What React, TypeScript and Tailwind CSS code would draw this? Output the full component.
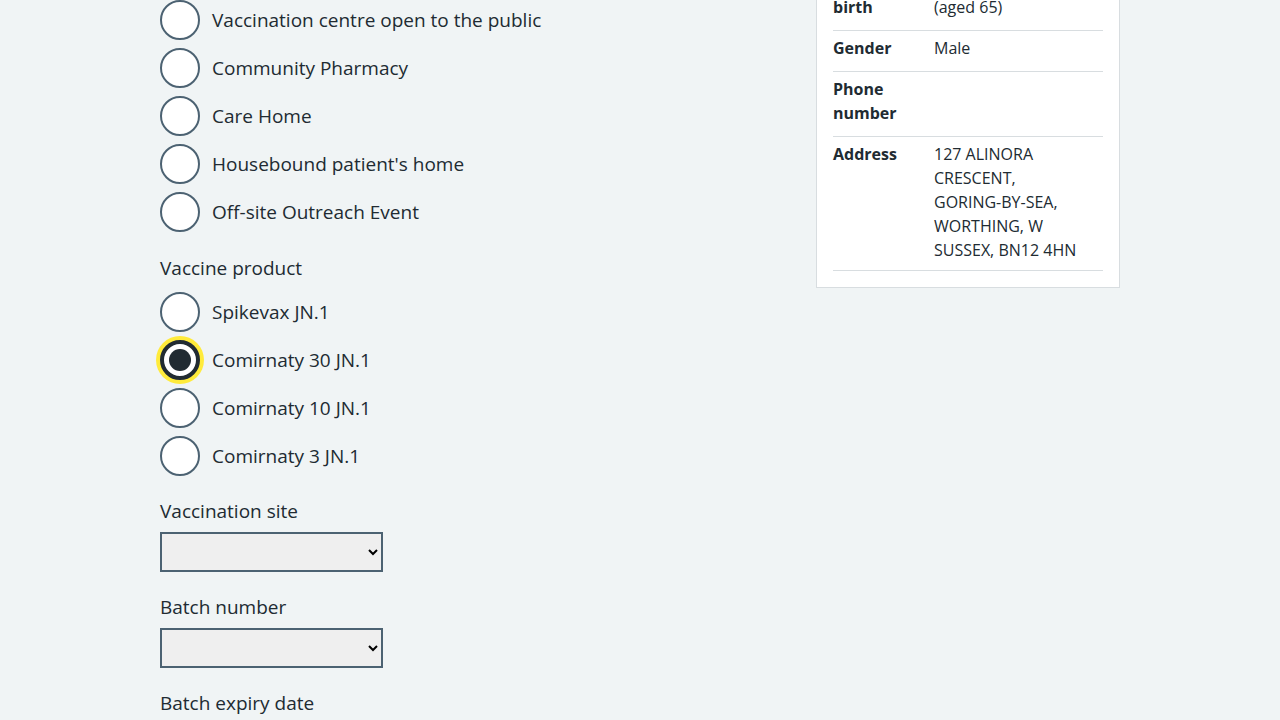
import React from "react";

const font = { fontFamily: '"Open Sans", "Liberation Sans", Arial, sans-serif' };

function Radio({ label, checked = false }: { label: string; checked?: boolean }) {
  return (
    <div className="flex items-center h-10 mb-2">
      {checked ? (
        <span className="relative w-10 h-10 rounded-full bg-white border-4 border-[#212b32] shadow-[0_0_0_4px_#ffeb3b] flex items-center justify-center shrink-0">
          <span className="w-[22px] h-[22px] rounded-full bg-[#212b32]" />
        </span>
      ) : (
        <span className="w-10 h-10 rounded-full bg-white border-2 border-[#4c6272] shrink-0" />
      )}
      <span className="ml-3 text-[19px] leading-7 text-[#212b32]">{label}</span>
    </div>
  );
}

function Row({ k, children, last = false }: { k: React.ReactNode; children?: React.ReactNode; last?: boolean }) {
  return (
    <div
      className={
        last
          ? "flex border-b border-[#d8dde0] pt-[5px] pb-[8px] text-[16px] leading-6 text-[#212b32]"
          : "flex border-b border-[#d8dde0] pt-[5px] pb-[11px] text-[16px] leading-6 text-[#212b32]"
      }
    >
      <div className="w-[101px] font-bold shrink-0">{k}</div>
      <div className="flex-1">{children}</div>
    </div>
  );
}

export default function App() {
  return (
    <div className="w-[1280px] h-[720px] overflow-hidden bg-[#f0f4f5]" style={font}>
      <div className="w-[960px] mx-auto flex items-start">
        <div className="w-[656px]">
          <Radio label="Vaccination centre open to the public" />
          <Radio label="Community Pharmacy" />
          <Radio label="Care Home" />
          <Radio label="Housebound patient's home" />
          <Radio label="Off-site Outreach Event" />

          <div className="mt-[22px] text-[19px] leading-7 text-[#212b32] mb-[10px]">Vaccine product</div>
          <Radio label="Spikevax JN.1" />
          <Radio label="Comirnaty 30 JN.1" checked />
          <Radio label="Comirnaty 10 JN.1" />
          <Radio label="Comirnaty 3 JN.1" />

          <div className="mt-[21px] text-[19px] leading-7 text-[#212b32] mb-[7px]">Vaccination site</div>
          <select className="block w-[223px] h-10 border-2 border-[#4c6272] bg-[#efefef] text-[16px]">
            <option></option>
          </select>

          <div className="mt-[21px] text-[19px] leading-7 text-[#212b32] mb-[7px]">Batch number</div>
          <select className="block w-[223px] h-10 border-2 border-[#4c6272] bg-[#efefef] text-[16px]">
            <option></option>
          </select>

          <div className="mt-[21px] text-[19px] leading-7 text-[#212b32]">Batch expiry date</div>
        </div>

        <div className="w-[304px] -mt-[35px] bg-white border border-[#d8dde0] px-4 pb-4 pt-0">
          <Row k={<>Date of<br />birth</>}>
            <>1 June 1959<br />(aged 65)</>
          </Row>
          <Row k="Gender">Male</Row>
          <Row k={<>Phone<br />number</>} />
          <Row k="Address" last>
            127 ALINORA CRESCENT, <span className="whitespace-nowrap">GORING-BY-SEA,</span> WORTHING, W SUSSEX, BN12 4HN
          </Row>
        </div>
      </div>
    </div>
  );
}
